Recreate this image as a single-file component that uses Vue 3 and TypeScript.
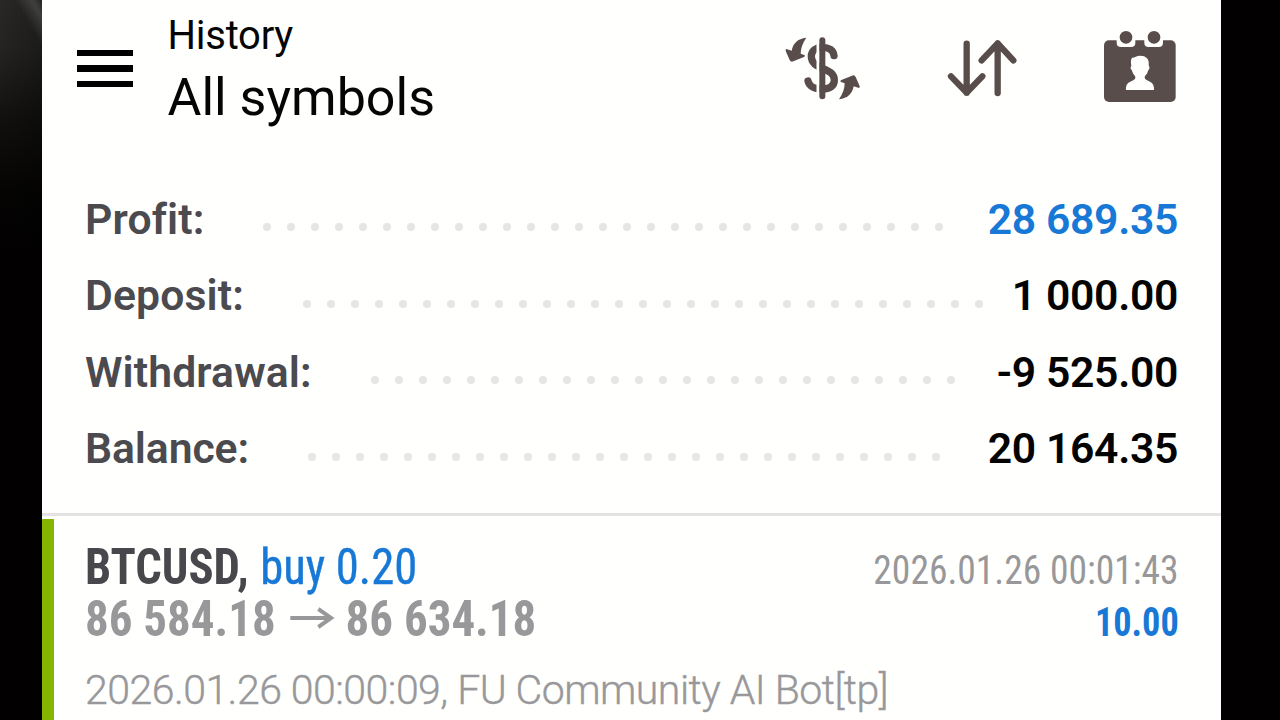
<script setup lang="ts">
interface SummaryRow {
  label: string
  value: string
  dots: number
  accent?: boolean
}

const rows: SummaryRow[] = [
  { label: 'Profit:', value: '28 689.35', dots: 29, accent: true },
  { label: 'Deposit:', value: '1 000.00', dots: 29 },
  { label: 'Withdrawal:', value: '-9 525.00', dots: 25 },
  { label: 'Balance:', value: '20 164.35', dots: 27 },
]

const deal = {
  symbol: 'BTCUSD,',
  side: 'buy 0.20',
  open: '86 584.18',
  close: '86 634.18',
  closedAt: '2026.01.26 00:01:43',
  profit: '10.00',
  comment: '2026.01.26 00:00:09, FU Community AI Bot[tp]',
}
</script>

<template>
  <div class="stage">
    <main class="screen">
      <header class="toolbar">
        <div class="menu"><i></i><i></i><i></i></div>
        <div class="titles">
          <div class="title">History</div>
          <div class="subtitle">All symbols</div>
        </div>
        <div class="actions">
          <svg class="icon" viewBox="0 0 330 300">
            <path class="ess" d="M192 107C190 90 176 82 157 82C137 82 124 93 124 109C124 129 138 136 157 145C180 154 193 162 193 181C193 198 180 207 157 207C133 207 118 200 114 183" />
            <path class="gap" d="M144 60V232" />
            <path class="bar" d="M157 61V229" />
            <path class="solid" d="M109 53C82 56 69 70 65 92L49 87Q45 88 48 95L59 120Q62 127 70 124L102 111Q108 108 103 105L92 101C92 85 98 69 109 53Z" />
            <path class="solid" transform="rotate(180 158 145.5)" d="M109 53C82 56 69 70 65 92L49 87Q45 88 48 95L59 120Q62 127 70 124L102 111Q108 108 103 105L92 101C92 85 98 69 109 53Z" />
          </svg>
          <svg class="icon" viewBox="0 0 330 300">
            <path class="arrows" d="M110 71V218M63 169L110 218L157 169M203 219V70M155 121L203 70L250 121" />
          </svg>
          <svg class="icon" viewBox="0 0 330 300">
            <rect class="solid" x="42" y="61" width="215" height="185" rx="15" />
            <path class="paper" d="M80 55H136V68Q136 81 123 81H93Q80 81 80 68ZM163 55H219V68Q219 81 206 81H176Q163 81 163 68Z" />
            <circle class="solid" cx="108" cy="52" r="19" />
            <circle class="solid" cx="192" cy="52" r="19" />
            <path class="paper" d="M108 210C107 194 113 187 127 182C135 179 138 175 135 168C129 162 127 157 126 151C121 148 121 141 124 137C122 126 122 119 126 113C133 114 139 107 151 107C168 107 179 117 176 136C180 141 179 149 174 152C173 158 170 163 165 168C162 175 166 179 174 182C187 187 193 194 192 210Z" />
          </svg>
        </div>
      </header>

      <section class="summary">
        <div v-for="row in rows" :key="row.label" class="row">
          <span class="label">{{ row.label }}</span>
          <span class="leader"><i v-for="n in row.dots" :key="n"></i></span>
          <span class="value" :class="{ accent: row.accent }">{{ row.value }}</span>
        </div>
      </section>

      <section class="deal">
        <div class="line">
          <div class="cond order"><b class="symbol">{{ deal.symbol }}</b> <span class="accent side">{{ deal.side }}</span></div>
          <div class="cond small muted date">{{ deal.closedAt }}</div>
        </div>
        <div class="line">
          <div class="cond muted prices">
            <b>{{ deal.open }}</b>
            <svg class="to" viewBox="0 0 46 22"><path d="M0 11H43M29.500 2L43 11L29.500 20" /></svg>
            <b>{{ deal.close }}</b>
          </div>
          <b class="cond small accent profit">{{ deal.profit }}</b>
        </div>
        <div class="comment">{{ deal.comment }}</div>
      </section>
    </main>
  </div>
</template>

<style>
body {
  margin: 0;
  overflow: hidden;
}
</style>

<style scoped>
.stage {
  width: 1280px;
  height: 720px;
  padding: 0 59px 0 42px;
  box-sizing: border-box;
  overflow: hidden;
  background:
    linear-gradient(60deg, transparent 60%, rgba(110, 110, 108, 0.4) 85%, rgba(60, 60, 60, 0.2) 100%) 0 0 / 42px 44px no-repeat,
    linear-gradient(90deg, transparent, rgba(0, 0, 0, 0.25)) 0 0 / 42px 250px no-repeat,
    linear-gradient(#292827 0, #242322 50px, #11100f 120px, #050403 190px, #020001 260px) 0 0 / 42px 720px no-repeat,
    #020001;
  font-family: Roboto, "Liberation Sans", sans-serif;
  font-variant-ligatures: none;
}
.screen {
  height: 720px;
  background: #fffffe;
  overflow: hidden;
  white-space: nowrap;
}
.toolbar {
  display: flex;
  height: 181.5px;
  padding-left: 34.5px;
  box-sizing: border-box;
}
.menu {
  display: flex;
  flex-direction: column;
  gap: 9.3px;
  width: 56px;
  padding-top: 50px;
}
.menu i {
  height: 6.2px;
  background: #000;
}
.titles {
  margin-left: 35px;
  padding-top: 12px;
  color: #050505;
}
.title {
  font-size: 40px;
  line-height: 48px;
  letter-spacing: -0.25px;
}
.subtitle {
  margin-top: 5px;
  font-size: 52px;
  line-height: 66px;
}
.actions {
  display: flex;
  gap: 50px;
  margin-left: auto;
  padding: 20px 21px 0 0;
}
.icon {
  width: 110px;
  height: 100px;
}
.icon path {
  fill: none;
  stroke-linecap: round;
  stroke-linejoin: round;
}
.icon .solid {
  fill: #594d4b;
}
.icon .paper {
  fill: #fffffe;
}
.ess {
  stroke: #594d4b;
  stroke-width: 22;
}
.gap {
  stroke: #fffffe;
  stroke-width: 9;
}
.bar {
  stroke: #594d4b;
  stroke-width: 18;
}
.arrows {
  stroke: #594d4b;
  stroke-width: 19;
}
.summary {
  height: 331.5px;
  padding: 0 43px;
  border-bottom: 3px solid #e3e3e3;
}
.row {
  display: flex;
  height: 76.5px;
  line-height: 75px;
  font-size: 42.7px;
  font-weight: 600;
  color: #4b4a4e;
}
.label {
  letter-spacing: 0.12px;
}
.leader {
  display: flex;
  flex: 1;
  gap: 16px;
  margin-left: 59px;
  padding-top: 41.5px;
}
.row:last-child .label {
  letter-spacing: -0.1px;
}
.leader i {
  flex: none;
  width: 8px;
  height: 8px;
  border-radius: 50%;
  background: #e6e6e6;
}
.value {
  color: #030303;
  letter-spacing: -0.35px;
}
.accent,
.value.accent {
  color: #1878d6;
}
.deal {
  margin-top: 3px;
  height: 201px;
  border-left: 12px solid #86b500;
  padding: 22px 43px 0 31px;
  box-sizing: border-box;
}
.line {
  display: flex;
  justify-content: space-between;
  align-items: baseline;
  height: 52px;
}
.cond {
  font-family: "Roboto Condensed", Roboto, sans-serif;
  font-stretch: 75%;
  font-size: 49.5px;
  line-height: 52px;
}
.order {
  transform: scaleX(0.942);
  transform-origin: left;
}
.side {
  margin-left: 1px;
  -webkit-text-stroke: 0.4px currentColor;
}
.small {
  font-size: 41px;
}
.date {
  margin-right: -1px;
  transform: scaleX(0.915);
  transform-origin: right;
}
.profit {
  margin-right: -1px;
  transform: scaleX(0.885);
  transform-origin: right;
}
.symbol {
  color: #48474b;
}
.muted,
.comment {
  color: #98989a;
}
.prices {
  display: flex;
  transform: scaleX(0.949);
  transform-origin: left;
}
.to {
  width: 48.7px;
  height: 22px;
  margin: 14px 11px 0 14px;
}
.to path {
  fill: none;
  stroke: #98989a;
  stroke-width: 4;
}
.comment {
  margin-top: 15px;
  font-size: 41px;
  font-weight: 300;
  letter-spacing: -0.52px;
  line-height: 60px;
  -webkit-text-stroke: 0.4px currentColor;
}
</style>
